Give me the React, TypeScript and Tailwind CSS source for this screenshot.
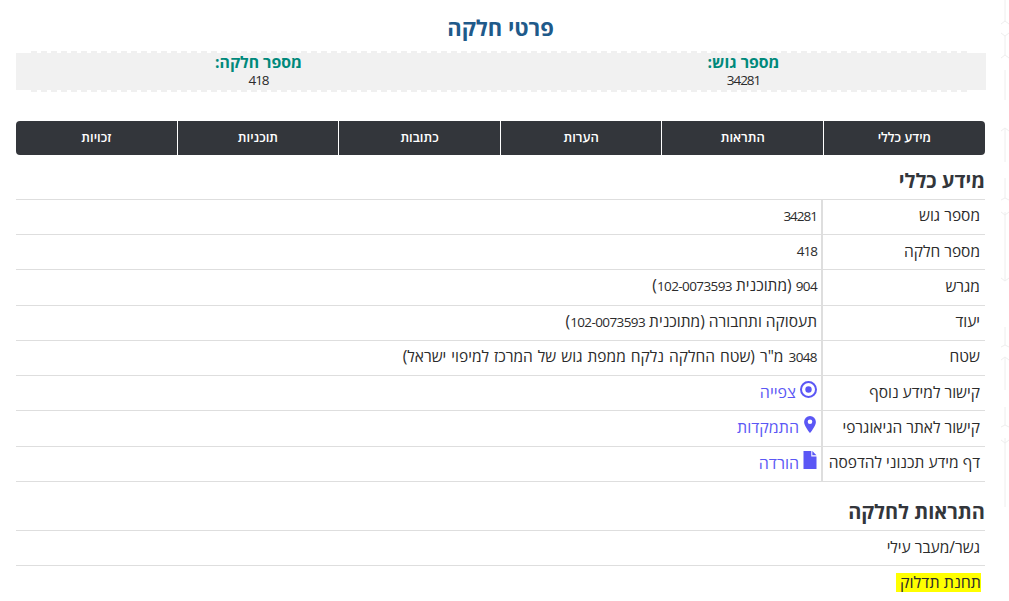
const Num = ({ children }: { children: React.ReactNode }) => (
  <span className="text-[13.5px] tracking-[-0.6px]">{children}</span>
);

const ShortNum = ({ children }: { children: React.ReactNode }) => (
  <span className="text-[13.5px] tracking-[-1px]">{children}</span>
);

const rows = [
  { label: "מספר גוש", value: <ShortNum>34281</ShortNum> },
  { label: "מספר חלקה", value: <ShortNum>418</ShortNum> },
  { label: "מגרש", value: <><Num>904</Num> (מתוכנית <Num>102-0073593</Num>)</> },
  { label: "יעוד", value: <>תעסוקה ותחבורה (מתוכנית <Num>102-0073593</Num>)</> },
  { label: "שטח", value: <span className="[word-spacing:1px]"><Num>3048</Num> מ"ר (שטח החלקה נלקח ממפת גוש של המרכז למיפוי ישראל)</span> },
];

const tabs = ["מידע כללי", "התראות", "הערות", "כתובות", "תוכניות", "זכויות"];

const PinIcon = () => (
  <svg width="14" height="17" viewBox="0 0 14 17" className="-translate-y-[3px] fill-[#5b57f5]">
    <path fillRule="evenodd" d="M7 0A5.900 5.900 0 0 0 1.100 5.900C1.100 9.900 7 17 7 17s5.900-7.100 5.900-11.100A5.900 5.900 0 0 0 7 0Zm0 8.100a2.300 2.300 0 1 1 0-4.600 2.300 2.300 0 0 1 0 4.600Z" />
  </svg>
);

const TargetIcon = () => (
  <svg width="17" height="17" viewBox="0 0 17 17" className="-translate-y-[3px] fill-[#5b57f5]">
    <path fillRule="evenodd" d="M8.500 0a8.500 8.500 0 1 0 0 17 8.500 8.500 0 0 0 0-17Zm0 15a6.500 6.500 0 1 1 0-13 6.500 6.500 0 0 1 0 13Z" />
    <circle cx="8.500" cy="8.500" r="3.200" />
  </svg>
);

const FileIcon = () => (
  <svg width="14" height="18" viewBox="0 0 14 18" className="-translate-y-[3px] fill-[#5b57f5]">
    <path d="M.5 0h7.800v5.400h5.200V18H.5Z" />
    <path d="M9.300 0l4.200 4.300H9.300Z" />
  </svg>
);

const LinkRow = ({ label, icon, text }: { label: string; icon: React.ReactNode; text: string }) => (
  <div className="flex h-[35.22px] border-b border-[#dedede]">
    <div className="flex w-[164px] shrink-0 items-center border-l-2 border-[#dedede] pr-[5px] pb-[2px]">{label}</div>
    <div className="flex items-center gap-1 pr-[4px] pb-[2px] text-base text-[#5b57f5]">
      {icon}
      <span>{text}</span>
    </div>
  </div>
);

const Dashes = () => (
  <div className="mx-[15px] h-[2px] bg-[repeating-linear-gradient(90deg,#f0f0f0_0_6px,transparent_6px_10px)]" />
);

// faint hex pattern bleeding in from the page background
const BgPattern = () => (
  <svg width="12" height="601" className="absolute top-0 right-0 stroke-[#eeeeee]" fill="none">
    <path d="M8 0v22M4 24l4-3 4 3M4 33l4 3 4-3M8 36v19M4 58l4-3 4 3M8 70v30M8 129v33M4 131l4-3 4 3M8 178v20M4 200l4-2 4 2M4 212l4 3 4-3M8 212v68M4 278l4 3 4-3M8 327v18M4 347l4-2 4 2M8 358v32M4 360l4-3 4 3M8 407v18M4 427l4-2 4 2M4 440l4 3 4-3M8 438v69" />
  </svg>
);

export default function App() {
  return (
    <div dir="rtl" className="relative h-[601px] w-[1009px] overflow-hidden bg-white pr-6 pl-4 font-['Open_Sans','Noto_Sans',sans-serif] text-[15.5px] text-[#2b2b2b]">
      <BgPattern />
      <h1 className="pt-[13px] text-center text-[22px] leading-7 font-bold text-[#1f5a8a]">פרטי חלקה</h1>
      <div className="-mr-px mt-[10px]">
        <Dashes />
        <div className="flex h-[37px] bg-[#f1f1f1]">
          <div className="w-1/2 text-center">
            <div className="text-[15.8px] leading-[18px] font-bold text-[#00897b]">מספר גוש:</div>
            <div className="text-[13.5px] leading-[19px] tracking-[-1px]">34281</div>
          </div>
          <div className="w-1/2 text-center">
            <div className="text-[15.8px] leading-[18px] font-bold text-[#00897b]">מספר חלקה:</div>
            <div className="text-[13.5px] leading-[19px] tracking-[-1px]">418</div>
          </div>
        </div>
        <Dashes />
      </div>
      <div className="mt-[29px] mr-[0.3px] flex h-[34px] overflow-hidden rounded-[4px] bg-[#33363b]">
        {tabs.map((t) => (
          <div key={t} className="flex flex-1 items-center justify-center border-l border-white text-[13px] font-semibold text-white last:border-l-0">
            {t}
          </div>
        ))}
      </div>
      <h2 className="mt-[14px] mb-[6px] text-xl leading-6 font-bold text-[#33363b]">מידע כללי</h2>
      <div className="border-t border-[#dedede]">
        {rows.map((r) => (
          <div key={r.label} className="flex h-[35.22px] border-b border-[#dedede]">
            <div className="flex w-[164px] shrink-0 items-center border-l-2 border-[#dedede] pr-[5px] pb-[2px]">{r.label}</div>
            <div className="flex items-center pr-[4px] pb-[3px]"><div>{r.value}</div></div>
          </div>
        ))}
        <LinkRow label="קישור למידע נוסף" icon={<TargetIcon />} text="צפייה" />
        <LinkRow label="קישור לאתר הגיאוגרפי" icon={<PinIcon />} text="התמקדות" />
        <LinkRow label="דף מידע תכנוני להדפסה" icon={<FileIcon />} text="הורדה" />
      </div>
      <h2 className="mt-[18px] mb-[6px] text-xl leading-6 font-bold text-[#33363b]">התראות לחלקה</h2>
      <div className="border-t border-[#dedede]">
        <div className="flex h-[35px] items-center border-b border-[#dedede] pr-[5px] pb-[1px]">גשר/מעבר עילי</div>
        <div className="flex h-[34px] items-center pr-[4px]">
          <span className="bg-[#ffff00] pl-[4px] text-base leading-[19px]">תחנת תדלוק</span>
        </div>
      </div>
    </div>
  );
}
